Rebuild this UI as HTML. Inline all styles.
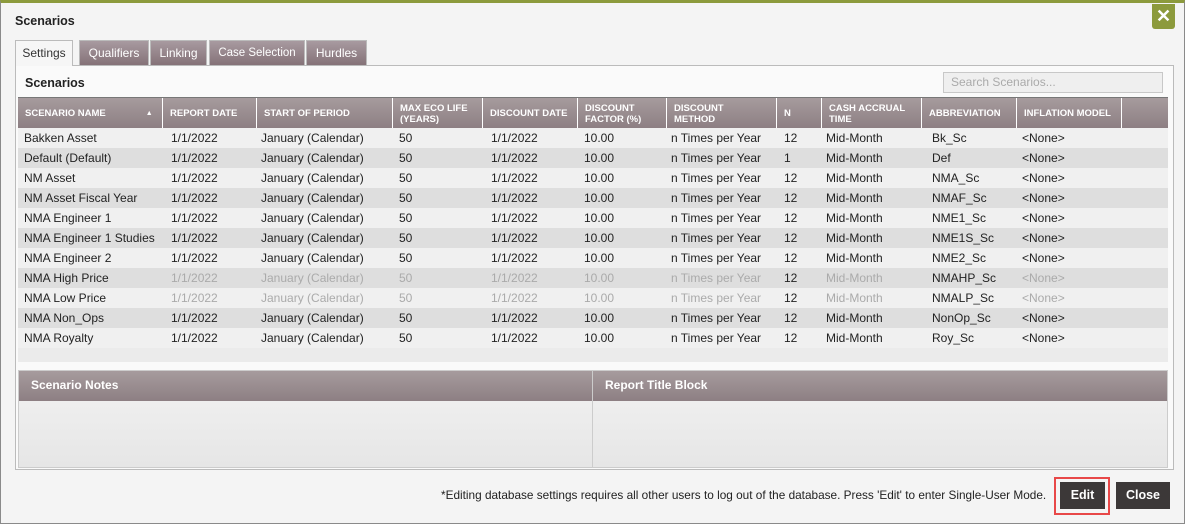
<!DOCTYPE html>
<html><head><style>
*{box-sizing:border-box;margin:0;padding:0}
body{width:1185px;height:524px;overflow:hidden;background:#f4f4f4;font-family:"Liberation Sans",sans-serif;font-size:12px;color:#222;position:relative}
.frame{position:absolute;left:0;top:0;width:1185px;height:524px;border:1px solid #8a8a8a;border-top:3px solid #8c9a3c;}
.title{position:absolute;left:15px;top:14px;font-weight:bold;font-size:12.5px;color:#222}
.x{position:absolute;left:1152px;top:4px;width:23px;height:25px;background:#8c9a3c;border-radius:0 0 3px 3px;color:#fff;font-weight:bold;font-size:18px;text-align:center;line-height:24px}
.tab{position:absolute;top:40px;height:25px;background:linear-gradient(#a89aa0,#857278);color:#fff;border:1px solid #bbb;border-bottom:none;text-align:center;line-height:24px;font-size:12px;white-space:nowrap}
.tab.on{background:#f6f6f6;color:#333;height:26px}
.panel{position:absolute;left:15px;top:65px;width:1159px;height:405px;border:1px solid #bbb;background:#fafafa}
.h2{position:absolute;left:25px;top:76px;font-weight:bold;font-size:12.5px}
.search{position:absolute;left:943px;top:72px;width:220px;height:21px;border:1px solid #c8c8c8;background:#efefef;color:#aaa;padding-left:7px;line-height:19px;font-size:12px}
.grid{position:absolute;left:18px;top:97px;width:1150px;height:265px;background:#ebebeb}
.hdr{position:absolute;left:0;top:0;width:1150px;height:31px;background:linear-gradient(#a69b9d,#8d7f83);border-top:1px solid #777}
.hc{position:absolute;top:0;height:31px;color:#fff;font-weight:bold;font-size:9.5px;padding-left:7px;display:flex;align-items:center;line-height:11px;border-right:1px solid #fff}
.row{position:absolute;left:0;width:1150px;height:20px}
.row span{position:absolute;top:3px;font-size:12px;white-space:nowrap}
.row span.d{color:#aaa}
.np{position:absolute;top:370px;height:98px;background:linear-gradient(#f2f2f2,#e6e6e6);border:1px solid #ccc}
.nph{height:30px;background:linear-gradient(#a69b9d,#8d7f83);color:#fff;font-weight:bold;font-size:12px;padding-left:12px;line-height:29px}
.foot{position:absolute;left:441px;top:488px;font-size:11.8px;color:#222;white-space:nowrap}
.btn{position:absolute;top:482px;height:27px;background:#3c3838;color:#fff;font-weight:bold;font-size:12.5px;text-align:center;line-height:27px}
</style></head><body>
<div class="frame"></div>
<div class="title">Scenarios</div>
<div class="x">✕</div>
<div class="panel"></div>
<div class="tab on" style="left:15px;width:58px">Settings</div>
<div class="tab" style="left:79px;width:70px">Qualifiers</div>
<div class="tab" style="left:150px;width:57px">Linking</div>
<div class="tab" style="left:209px;width:96px;font-size:11.5px">Case Selection</div>
<div class="tab" style="left:306px;width:61px">Hurdles</div>
<div class="h2">Scenarios</div>
<div class="search">Search Scenarios...</div>
<div class="grid">
<div class="hdr">
<div class="hc" style="left:0;width:145px">SCENARIO NAME<span style="margin-left:40px;font-size:7px">▲</span></div>
<div class="hc" style="left:145px;width:94px">REPORT DATE</div>
<div class="hc" style="left:239px;width:136px">START OF PERIOD</div>
<div class="hc" style="left:375px;width:90px">MAX ECO LIFE<br>(YEARS)</div>
<div class="hc" style="left:465px;width:95px">DISCOUNT DATE</div>
<div class="hc" style="left:560px;width:89px">DISCOUNT<br>FACTOR (%)</div>
<div class="hc" style="left:649px;width:110px">DISCOUNT<br>METHOD</div>
<div class="hc" style="left:759px;width:45px">N</div>
<div class="hc" style="left:804px;width:100px">CASH ACCRUAL<br>TIME</div>
<div class="hc" style="left:904px;width:95px">ABBREVIATION</div>
<div class="hc" style="left:999px;width:105px">INFLATION MODEL</div>
</div>
<div id="rows"></div>
</div>
<div class="np" style="left:18px;width:575px"><div class="nph">Scenario Notes</div></div>
<div class="np" style="left:592px;width:576px"><div class="nph">Report Title Block</div></div>
<div class="foot">*Editing database settings requires all other users to log out of the database. Press 'Edit' to enter Single-User Mode.</div>
<div style="position:absolute;left:1054px;top:477px;width:56px;height:38px;border:2px solid #e84848"></div>
<div class="btn" style="left:1060px;width:45px">Edit</div>
<div class="btn" style="left:1116px;width:54px">Close</div>
<script>
var d=[["Bakken Asset","12","Bk_Sc"],["Default (Default)","1","Def"],["NM Asset","12","NMA_Sc"],["NM Asset Fiscal Year","12","NMAF_Sc"],["NMA Engineer 1","12","NME1_Sc"],["NMA Engineer 1 Studies","12","NME1S_Sc"],["NMA Engineer 2","12","NME2_Sc"],["NMA High Price","12","NMAHP_Sc",1],["NMA Low Price","12","NMALP_Sc",1],["NMA Non_Ops","12","NonOp_Sc"],["NMA Royalty","12","Roy_Sc"]];
var h="";
d.forEach(function(r,i){var g=r[3]?' class="d"':'';
h+='<div class="row" style="top:'+(31+i*20)+'px;background:'+(i%2?'#dedede':'#f0f0f0')+'"><span style="left:6px">'+r[0]+'</span><span style="left:153px"'+g+'>1/1/2022</span><span style="left:243px"'+g+'>January (Calendar)</span><span style="left:381px"'+g+'>50</span><span style="left:473px"'+g+'>1/1/2022</span><span style="left:566px"'+g+'>10.00</span><span style="left:653px"'+g+'>n Times per Year</span><span style="left:766px">'+r[1]+'</span><span style="left:808px"'+g+'>Mid-Month</span><span style="left:914px">'+r[2]+'</span><span style="left:1004px"'+g+'>&lt;None&gt;</span></div>';});
document.getElementById('rows').innerHTML=h;
</script>
</body></html>
